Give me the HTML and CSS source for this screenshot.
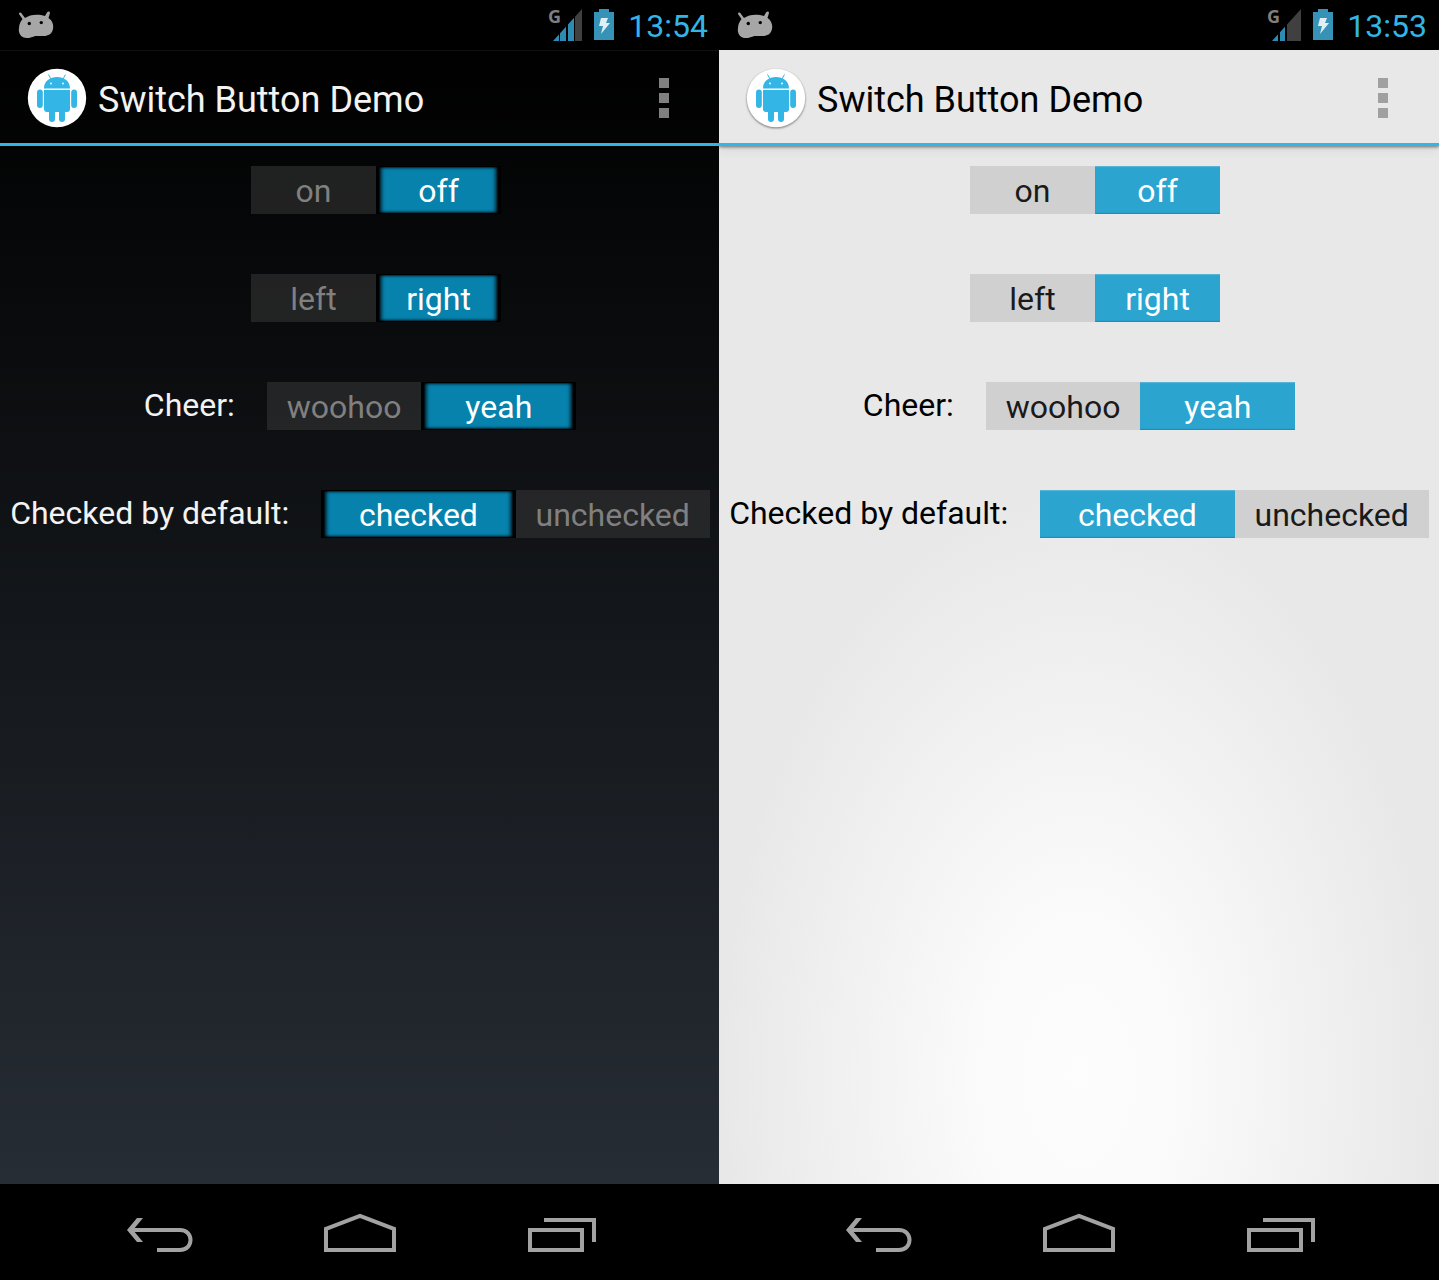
FILE: index.html
```
<!DOCTYPE html>
<html lang="en">
<head>
<meta charset="utf-8">
<meta name="viewport" content="width=device-width, initial-scale=1">
<title>Switch Button Demo</title>
<link rel="stylesheet" href="styles.css">
</head>
<body>
<svg class="defs" aria-hidden="true">
  <defs>
    <symbol id="debug" viewBox="0 0 36 28">
      <path fill="#a6a6a6" d="M1 3C1 1 3 1 4 3L7 7C11 4 17 3 23 4L27 5L29 1.500C30 0 32 0 32 2L30.500 7C34 9 36 14 35 18C34 23 30 25 26 25H19C15 25 14 27 9 27C3 27 0 22 1 17C1 13 3 10 4.500 8Z"/>
      <g fill="#000"><circle cx="11.300" cy="12.500" r="1.700"/><circle cx="23.300" cy="11.600" r="1.700"/></g>
    </symbol>
    <symbol id="robot" viewBox="0 0 60 60">
      <circle cx="30" cy="30" r="29.200" fill="#fff"/>
      <g fill="#33b5e5">
        <path d="M17 20.500C17 13 23 9 30 9S43 13 43 20.500ZM17 22H43V41Q43 44 40 44H20Q17 44 17 41Z"/>
        <rect x="10" y="21.500" width="5.800" height="18.500" rx="2.900"/>
        <rect x="44.200" y="21.500" width="5.800" height="18.500" rx="2.900"/>
        <path d="M22 43H28V51A3 3 0 0 1 22 51ZM32 43H38V51A3 3 0 0 1 32 51Z"/>
      </g>
      <path d="M21.500 6.500L24 11M38.500 6.500L36 11" stroke="#33b5e5" stroke-width="1"/>
      <g fill="#fff"><circle cx="24" cy="15.500" r="1"/><circle cx="36" cy="15.500" r="1"/></g>
    </symbol>
    <symbol id="battery" viewBox="0 0 20 32">
      <path fill="#3792b8" d="M5 0H15V3H20V31H0V3H5Z"/>
      <path fill="#e1eef4" d="M7 9H14L12 14H16L7 25L9 17H5Z"/>
    </symbol>
    <clipPath id="wedge"><path d="M5 32L34 0V32Z"/></clipPath>
    <symbol id="more" viewBox="0 0 10 40">
      <path fill="currentColor" d="M0 0H10V10H0ZM0 15H10V25H0ZM0 30H10V40H0Z"/>
    </symbol>
    <symbol id="back" viewBox="0 0 80 96">
      <path fill="none" stroke="#a2a2a2" stroke-width="4" d="M10 46H60C74 46 74 66 60 66H37"/>
      <path fill="#a2a2a2" d="M7 46L17 34H23L13 46L23 58H17Z"/>
    </symbol>
    <symbol id="home" viewBox="0 0 80 96">
      <path fill="none" stroke="#a2a2a2" stroke-width="4" d="M6 66V45L40 32L74 45V66Z"/>
    </symbol>
    <symbol id="recents" viewBox="0 0 80 96">
      <path fill="none" stroke="#a2a2a2" stroke-width="4" d="M10 46H62V66H10ZM24 36H74V58"/>
    </symbol>
  </defs>
</svg>

<main class="screens">
  <section class="phone dark" aria-label="Dark theme">
    <div class="status">
      <svg class="debug"><use href="#debug"/></svg>
      <svg class="signal" viewBox="0 0 34 32">
        <text class="network" x="0" y="14">G</text>
        <g clip-path="url(#wedge)">
          <path fill="#2d8cb4" d="M5 0H11V32H5ZM12 0H18V32H12ZM20 0H26V32H20Z"/>
          <path fill="#404040" d="M27 0H34V32H27Z"/>
        </g>
      </svg>
      <svg class="battery"><use href="#battery"/></svg>
      <time class="clock">13:54</time>
    </div>
    <header class="bar">
      <svg class="logo"><use href="#robot"/></svg>
      <h1 class="title">Switch Button Demo</h1>
      <button class="menu" type="button" aria-label="More options"><svg class="more"><use href="#more"/></svg></button>
    </header>
    <form class="content">
      <div class="row">
        <span class="caption"></span>
        <div class="switch" role="radiogroup" aria-label="Power">
          <label class="option"><input type="radio" name="d-power"><span>on</span></label>
          <label class="option"><input type="radio" name="d-power" checked><span>off</span></label>
        </div>
      </div>
      <div class="row">
        <span class="caption"></span>
        <div class="switch" role="radiogroup" aria-label="Side">
          <label class="option"><input type="radio" name="d-side"><span>left</span></label>
          <label class="option"><input type="radio" name="d-side" checked><span>right</span></label>
        </div>
      </div>
      <div class="row">
        <span class="caption" id="d-cheer">Cheer:</span>
        <div class="switch" role="radiogroup" aria-labelledby="d-cheer">
          <label class="option"><input type="radio" name="d-cheer"><span>woohoo</span></label>
          <label class="option"><input type="radio" name="d-cheer" checked><span>yeah</span></label>
        </div>
      </div>
      <div class="row">
        <span class="caption" id="d-default">Checked by default:</span>
        <div class="switch" role="radiogroup" aria-labelledby="d-default">
          <label class="option"><input type="radio" name="d-default" checked><span>checked</span></label>
          <label class="option"><input type="radio" name="d-default"><span>unchecked</span></label>
        </div>
      </div>
    </form>
    <nav class="keys">
      <button class="key" type="button" aria-label="Back"><svg><use href="#back"/></svg></button>
      <button class="key" type="button" aria-label="Home"><svg><use href="#home"/></svg></button>
      <button class="key" type="button" aria-label="Recent apps"><svg><use href="#recents"/></svg></button>
    </nav>
  </section>

  <section class="phone light" aria-label="Light theme">
    <div class="status">
      <svg class="debug"><use href="#debug"/></svg>
      <svg class="signal" viewBox="0 0 34 32">
        <text class="network" x="0" y="14">G</text>
        <g clip-path="url(#wedge)">
          <path fill="#2d8cb4" d="M5 0H11V32H5ZM13 0H18V32H13Z"/>
          <path fill="#404040" d="M20 0H34V32H20Z"/>
        </g>
      </svg>
      <svg class="battery"><use href="#battery"/></svg>
      <time class="clock">13:53</time>
    </div>
    <header class="bar">
      <svg class="logo"><use href="#robot"/></svg>
      <h1 class="title">Switch Button Demo</h1>
      <button class="menu" type="button" aria-label="More options"><svg class="more"><use href="#more"/></svg></button>
    </header>
    <form class="content">
      <div class="row">
        <span class="caption"></span>
        <div class="switch" role="radiogroup" aria-label="Power">
          <label class="option"><input type="radio" name="l-power"><span>on</span></label>
          <label class="option"><input type="radio" name="l-power" checked><span>off</span></label>
        </div>
      </div>
      <div class="row">
        <span class="caption"></span>
        <div class="switch" role="radiogroup" aria-label="Side">
          <label class="option"><input type="radio" name="l-side"><span>left</span></label>
          <label class="option"><input type="radio" name="l-side" checked><span>right</span></label>
        </div>
      </div>
      <div class="row">
        <span class="caption" id="l-cheer">Cheer:</span>
        <div class="switch" role="radiogroup" aria-labelledby="l-cheer">
          <label class="option"><input type="radio" name="l-cheer"><span>woohoo</span></label>
          <label class="option"><input type="radio" name="l-cheer" checked><span>yeah</span></label>
        </div>
      </div>
      <div class="row">
        <span class="caption" id="l-default">Checked by default:</span>
        <div class="switch" role="radiogroup" aria-labelledby="l-default">
          <label class="option"><input type="radio" name="l-default" checked><span>checked</span></label>
          <label class="option"><input type="radio" name="l-default"><span>unchecked</span></label>
        </div>
      </div>
    </form>
    <nav class="keys">
      <button class="key" type="button" aria-label="Back"><svg><use href="#back"/></svg></button>
      <button class="key" type="button" aria-label="Home"><svg><use href="#home"/></svg></button>
      <button class="key" type="button" aria-label="Recent apps"><svg><use href="#recents"/></svg></button>
    </nav>
  </section>
</main>
</body>
</html>
```
FILE: styles.css
```
* { box-sizing: border-box; }
body {
  margin: 0;
  background: #fff;
  font-family: Roboto, "Liberation Sans", sans-serif;
  font-size: 32px;
  line-height: 40px;
}
svg { display: block; flex: none; overflow: visible; }
button { border: 0; padding: 0; background: none; color: inherit; font: inherit; }
.defs { position: absolute; width: 0; height: 0; }

.screens { display: flex; min-height: 100vh; padding-right: 1px; }
.phone { flex: 1; display: flex; flex-direction: column; overflow: hidden; }
.phone + .phone { margin-left: -1px; }
.dark { background: linear-gradient(#000 50px, #272d35 calc(100% - 96px)); color: #f3f3f3; }
.light {
  background: radial-gradient(ellipse 50% 46% at 50% 84%, #fdfdfd 0, #fafafa 30%, #e8e8e8 100%);
  color: #000;
}

.status {
  display: flex;
  align-items: center;
  height: 50px;
  padding: 0 12px 0 18px;
  background: #000;
  color: #33b5e5;
}
.debug { width: 36px; height: 28px; margin-right: auto; }
.signal { width: 34px; height: 32px; margin-right: 12px; }
.network { font: bold 18px "Noto Sans", sans-serif; fill: #7f7f7f; }
.battery { width: 20px; height: 32px; margin-right: 14px; }
.clock { padding-top: 2px; }

.bar {
  display: flex;
  align-items: center;
  height: 96px;
  padding: 2px 51px 0 27px;
  border-bottom: 3px solid #33b5e5;
}
.dark .bar { box-shadow: inset 0 1px #111; }
.light .bar { background: #e8e8e8; box-shadow: 0 1px 3px rgba(0, 0, 0, .5), 0 3px 12px rgba(0, 0, 0, .08); }
.logo { width: 60px; height: 60px; margin-right: 11px; }
.light .logo { filter: drop-shadow(0 1px 1px rgba(0, 0, 0, .5)); }
.title { flex: 1; margin: 0; padding-top: 4px; font-size: 36px; font-weight: 400; }
.menu { color: #808080; }
.light .menu { color: #a0a0a0; }
.more { width: 10px; height: 40px; }

.content { flex: 1; display: flex; flex-direction: column; gap: 60px; padding: 20px 0; }
.row { display: flex; justify-content: center; align-items: center; gap: 32px; }
.caption { padding-bottom: 2px; white-space: nowrap; }
.switch { display: grid; grid-template-columns: 1fr 1fr; min-width: 250px; height: 48px; }
.option { position: relative; display: flex; text-align: center; }
.option input { position: absolute; inset: 0; width: 100%; height: 100%; margin: 0; opacity: 0; }
.option span { flex: 1; padding: 5px 20px 3px; }
.dark .option span { background: rgba(51, 51, 51, .6); color: #808080; }
.light .option span { background: #d0d0d0; color: #1a1a1a; }
.dark .option input:checked + span {
  background: #0782ad;
  color: #fff;
  border: solid #000;
  border-width: 1px 3px;
  padding: 4px 17px 2px;
  box-shadow: inset 3px 0 4px -1px #000, inset -3px 0 4px -1px #000, inset 0 0 2px #000;
}
.light .option input:checked + span {
  background: #2ba4d0;
  color: #fff;
  box-shadow: inset 0 1px 1px #5cb6d6, inset 0 -1px 1px #2688ab;
}

.keys { display: flex; height: 96px; padding: 0 60px; background: #000; }
.key { flex: 1; display: flex; justify-content: center; }
.key svg { width: 80px; height: 96px; }
```
